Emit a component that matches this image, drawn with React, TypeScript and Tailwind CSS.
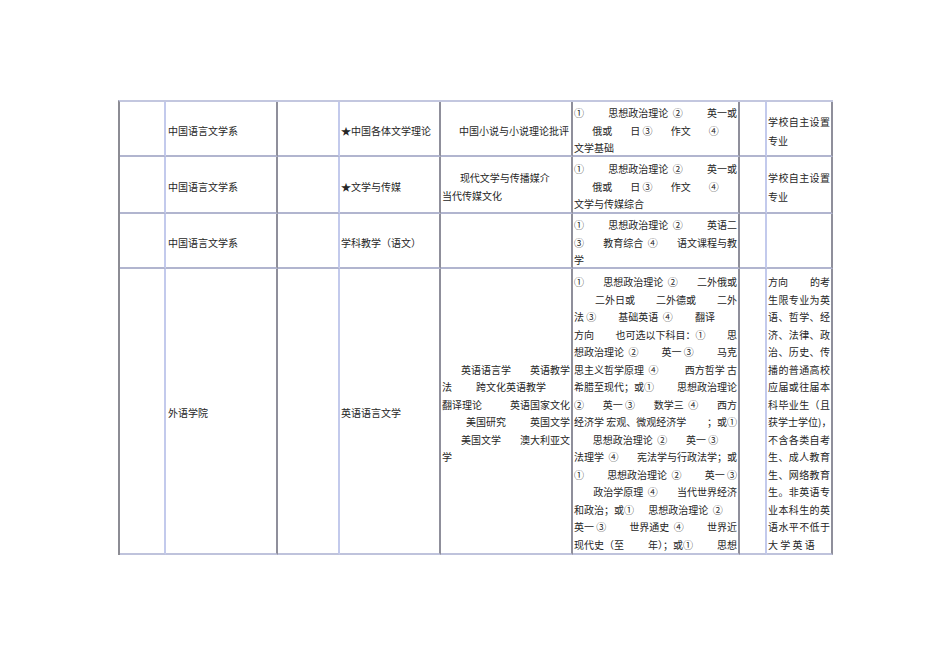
import React from "react"
import clsx from "clsx"

// 一行文字：多个片段时两端对齐（模拟 Word 的分散对齐）
function Line({ parts }: { parts: string[] }) {
  return (
    <div className={parts.length > 1 ? "flex justify-between whitespace-pre" : "whitespace-pre"}>
      {parts.map((p, i) => (
        <span key={i}>{p}</span>
      ))}
    </div>
  )
}

// 按字拆开，铺满整行
const spread = (s: string) => [...s]

function Cell({
  gray,
  last,
  className,
  children,
}: {
  gray?: boolean
  last?: boolean
  className?: string
  children?: React.ReactNode
}) {
  return (
    <div
      className={clsx(
        "flex flex-col justify-center overflow-hidden border-r-2 border-b-2 px-[1px] pt-[4px]",
        gray ? "border-r-[#8f8f9b]" : "border-r-[#c3caec]",
        last ? "border-b-[#bfc3dc]" : "border-b-[#b1b5cf]",
        className
      )}
    >
      {children}
    </div>
  )
}

const exam1 = [
  ["①", "思想政治理论  ②", "英一或"],
  ["", "俄或", "日 ③", "作文", "④", ""],
]

const englishDirections = [
  ["", "英语语言学", "英语教学"],
  ["法", "跨文化英语教学", ""],
  ["翻译理论", "英语国家文化"],
  ["", "美国研究", "英国文学"],
  ["", "美国文学", "澳大利亚文"],
  ["学"],
]

const englishExams = [
  ["①", "思想政治理论  ②", "二外俄或"],
  ["", "二外日或", "二外德或", "二外"],
  ["法 ③", "基础英语  ④", "翻译", ""],
  ["方向", "也可选以下科目：①", "思"],
  ["想政治理论  ②", "英一 ③", "马克"],
  ["思主义哲学原理  ④", "西方哲学 古"],
  ["希腊至现代；或①", "思想政治理论"],
  ["②", "英一 ③", "数学三  ④", "西方"],
  ["经济学 宏观、微观经济学", "；或①"],
  ["", "思想政治理论  ②", "英一 ③", ""],
  ["法理学  ④", "宪法学与行政法学；或"],
  ["①", "思想政治理论  ②", "英一 ③"],
  ["", "政治学原理  ④", "当代世界经济"],
  ["和政治；或①", "思想政治理论  ②", ""],
  ["英一 ③", "世界通史  ④", "世界近"],
  ["现代史（至", "年）；或①", "思想"],
]

const englishNotes = [
  ["方向", "的考"],
  spread("生限专业为英"),
  spread("语、哲学、经"),
  spread("济、法律、政"),
  spread("治、历史、传"),
  spread("播的普通高校"),
  spread("应届或往届本"),
  spread("科毕业生（且"),
  ["获学士学位)，"],
  spread("不含各类自考"),
  spread("生、成人教育"),
  spread("生、网络教育"),
  spread("生。非英语专"),
  spread("业本科生的英"),
  spread("语水平不低于"),
  ["大 学 英 语"],
]

export default function App() {
  return (
    <div
      className="min-h-screen bg-white pt-[100px] pl-[118px] text-[10px] leading-[17.5px] text-[#262626]"
      style={{ fontFamily: '"Noto Sans CJK SC", "Noto Sans", sans-serif' }}
    >
      <div className="inline-block border-t-2 border-l-2 border-t-[#c3c7df] border-l-[#8c8c94]">
        <div className="grid grid-cols-[46px_112px_62px_101px_132px_167px_27px_66px] grid-rows-[55px_57px_55px_286px]">
          {/* 第一行 */}
          <Cell />
          <Cell gray className="pl-[2px]">中国语言文学系</Cell>
          <Cell />
          <Cell gray>★中国各体文学理论</Cell>
          <Cell gray className="pr-[2px]">
            <Line parts={["", "中国小说与小说理论批评"]} />
          </Cell>
          <Cell gray>
            {exam1.map((p, i) => (
              <Line key={i} parts={p} />
            ))}
            <Line parts={["文学基础"]} />
          </Cell>
          <Cell />
          <Cell gray className="leading-[19px]">
            <Line parts={spread("学校自主设置")} />
            <Line parts={["专业"]} />
          </Cell>

          {/* 第二行 */}
          <Cell />
          <Cell gray className="pl-[2px]">中国语言文学系</Cell>
          <Cell />
          <Cell gray>★文学与传媒</Cell>
          <Cell gray className="leading-[18px]">
            <Line parts={["", "现代文学与传播媒介", " "]} />
            <Line parts={["当代传媒文化"]} />
          </Cell>
          <Cell gray>
            {exam1.map((p, i) => (
              <Line key={i} parts={p} />
            ))}
            <Line parts={["文学与传媒综合"]} />
          </Cell>
          <Cell />
          <Cell gray className="leading-[19px]">
            <Line parts={spread("学校自主设置")} />
            <Line parts={["专业"]} />
          </Cell>

          {/* 第三行 */}
          <Cell />
          <Cell gray className="pl-[2px]">中国语言文学系</Cell>
          <Cell />
          <Cell gray>学科教学（语文）</Cell>
          <Cell gray />
          <Cell gray>
            <Line parts={["①", "思想政治理论  ②", "英语二"]} />
            <Line parts={["③", "教育综合  ④", "语文课程与教"]} />
            <Line parts={["学"]} />
          </Cell>
          <Cell />
          <Cell gray />

          {/* 第四行 */}
          <Cell last />
          <Cell gray last className="pl-[2px]">外语学院</Cell>
          <Cell last />
          <Cell gray last>英语语言文学</Cell>
          <Cell gray last>
            {englishDirections.map((p, i) => (
              <Line key={i} parts={p} />
            ))}
          </Cell>
          <Cell gray last>
            {englishExams.map((p, i) => (
              <Line key={i} parts={p} />
            ))}
          </Cell>
          <Cell last />
          <Cell gray last>
            {englishNotes.map((p, i) => (
              <Line key={i} parts={p} />
            ))}
          </Cell>
        </div>
      </div>
    </div>
  )
}
